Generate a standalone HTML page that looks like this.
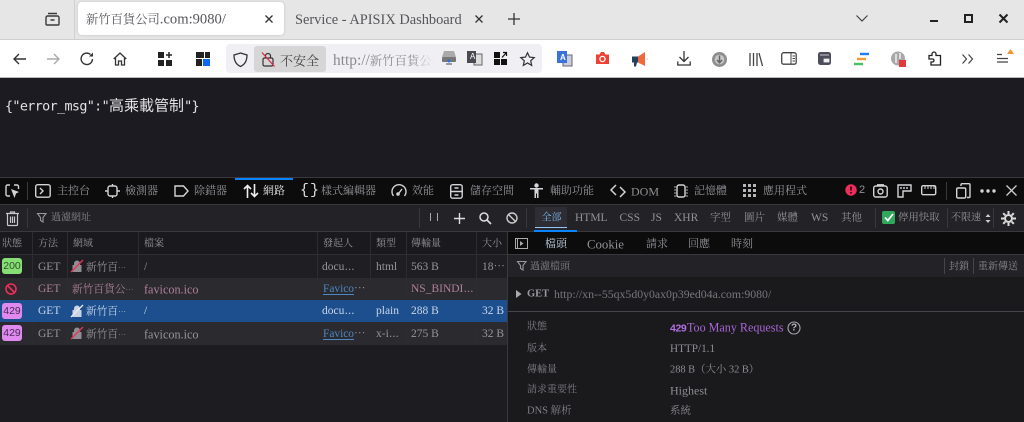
<!DOCTYPE html>
<html><head><meta charset="utf-8">
<style>
html,body{margin:0;padding:0;width:1024px;height:422px;overflow:hidden;background:#1c1b22}
body{position:relative;font-family:"Liberation Serif","Noto Serif CJK SC",serif}
#w{position:absolute;left:0;top:0;width:1024px;height:422px;overflow:hidden;filter:blur(.35px)}
.b{position:absolute}
.t{position:absolute;white-space:nowrap;line-height:1;transform:translateY(-50%)}
#dt ~ .t{transform:translateY(calc(-50% + .7px))}
svg{position:absolute;overflow:visible}
.tb{font-size:11px;color:#929297}
.s{font-size:10px;color:#929297}
.c{font-size:11.500px;color:#969699}
.k{font-size:10.700px}
.e{font-size:8px}
.f{font-size:12.200px}
.lk{color:#4d88c4;text-decoration:underline;text-underline-offset:2px;font-size:11.400px}
.l{font-size:10px;color:#808085}
.d{font-size:12px;color:#8e8e92}
.v{background:#2c2c31;width:1px;position:absolute}
.ic{fill:none;stroke:#d4d4d6;stroke-width:1.400}
.nv{fill:none;stroke:#3a3a3e;stroke-width:1.400}
</style></head><body><div id="w">
<!-- tab bar -->
<div class="b" style="left:0;top:0;width:1024px;height:39px;background:#e6e6e6"></div>
<div class="b" style="left:0;top:39px;width:1024px;height:1px;background:#cfcfcf"></div>
<div class="b" style="left:74px;top:0;width:1px;height:39px;background:#d0d0d0"></div>
<svg style="left:45px;top:11px" width="15" height="15" viewBox="0 0 15 15"><path class="nv" d="M1 6.500V13a1 1 0 0 0 1 1h11a1 1 0 0 0 1-1V6.500a1.500 1.500 0 0 0-1.500-1.500h-10A1.500 1.500 0 0 0 1 6.500zM3 2.500h9M5.500 9h4"/></svg>
<div class="b" style="left:78px;top:2px;width:206px;height:33px;background:#fff;border-radius:4px;box-shadow:0 0 3px rgba(0,0,0,.15)"></div>
<span class="t" style="left:86px;top:19.500px;font-size:14.600px;color:#55555a"><span style="font-size:12.300px">新竹百貨公司</span>.com:9080/</span>
<svg style="left:265px;top:15px" width="8" height="8"><path d="M.5.500l7 7M7.500.500l-7 7" stroke="#333" stroke-width="1.300"/></svg>
<span class="t" style="left:295px;top:19.500px;font-size:14.400px;color:#55555a">Service - APISIX Dashboard</span>
<svg style="left:475px;top:15px" width="8" height="8"><path d="M.5.500l7 7M7.500.500l-7 7" stroke="#333" stroke-width="1.300"/></svg>
<svg style="left:508px;top:13px" width="12" height="12"><path d="M6 0v12M0 6h12" stroke="#333" stroke-width="1.300"/></svg>
<svg style="left:856px;top:15px" width="12" height="7"><path d="M.5.500L6 6 11.500.500" fill="none" stroke="#444" stroke-width="1.200"/></svg>
<div class="b" style="left:930px;top:20px;width:8px;height:2px;background:#222"></div>
<div class="b" style="left:964px;top:14px;width:5px;height:5px;border:2px solid #222"></div>
<svg style="left:999px;top:14px" width="9" height="9"><path d="M.5.500l8 8M8.500.500l-8 8" stroke="#222" stroke-width="2"/></svg>
<!-- nav bar -->
<div class="b" style="left:0;top:40px;width:1024px;height:37px;background:#fff"></div>
<div class="b" style="left:0;top:77px;width:1024px;height:1px;background:#b8b8b8"></div>
<svg style="left:13px;top:53px" width="13" height="12"><path d="M13 6H1M6 1L1 6l5 5" fill="none" stroke="#333" stroke-width="1.400"/></svg>
<svg style="left:47px;top:53px" width="13" height="12"><path d="M0 6h12M7 1l5 5-5 5" fill="none" stroke="#aaa" stroke-width="1.400"/></svg>
<svg style="left:80px;top:52px" width="14" height="14" viewBox="0 0 14 14"><path d="M12.500 7A5.700 5.700 0 1 1 10.500 2.500" fill="none" stroke="#333" stroke-width="1.400"/><path d="M13 .5V4.500H9z" fill="#333"/></svg>
<svg style="left:113px;top:52px" width="14" height="14" viewBox="0 0 14 14"><path d="M.7 7L7 1l6.300 6M2.500 6v7h3V9h3v4h3V6" fill="none" stroke="#333" stroke-width="1.300"/></svg>
<svg style="left:158px;top:52px" width="14" height="14"><path d="M0 0h6v6H0zM0 8h6v6H0zM8 8h6v6H8z" fill="#222"/><path d="M11 0v6M8 3h6" stroke="#222" stroke-width="1.500"/></svg>
<svg style="left:196px;top:52px" width="14" height="14"><path d="M0 0h8v6H0zM9 0h5v6H9zM0 7h6v7H0z" fill="#222"/><path d="M7 7h7v7H7z" fill="#0a6cf0"/></svg>
<div class="b" style="left:226px;top:44px;width:316px;height:29px;background:#f0f0f4;border-radius:4px"></div>
<div class="b" style="left:254px;top:46px;width:72px;height:26px;background:#d6d6d6;border-radius:3px"></div>
<svg style="left:233px;top:52px" width="15" height="15" viewBox="0 0 15 15"><path d="M7.500 1L14 3c0 6-2 9.500-6.500 11.500C3 12.500 1 9 1 3z" fill="none" stroke="#333" stroke-width="1.300"/></svg>
<svg style="left:262px;top:52px" width="13" height="15" viewBox="0 0 13 15"><rect x="1" y="6" width="10" height="8" rx="1.500" fill="none" stroke="#333" stroke-width="1.200"/><path d="M3.500 6V4a2.500 2.500 0 0 1 5 0v2" fill="none" stroke="#333" stroke-width="1.200"/><path d="M0 .5L12.500 14.500" stroke="#e22850" stroke-width="1.300"/></svg>
<span class="t" style="left:280px;top:60.500px;font-size:13px;color:#444">不安全</span>
<span class="t" style="left:333px;top:60.500px;font-size:15.400px;color:#8a8a8a;width:102px;overflow:hidden;line-height:18px;-webkit-mask-image:linear-gradient(90deg,#000 75%,transparent)">http://<span style="font-size:12.400px">新竹百貨公司</span></span>
<svg style="left:441px;top:50px" width="16" height="16"><path d="M3 1h10l2 6H1z" fill="#aaa"/><rect x="1" y="7" width="14" height="5" rx="1" fill="#777"/><path d="M5 14h6" stroke="#99a" stroke-width="2"/><circle cx="8" cy="11" r="1.500" fill="#2a6fe0"/></svg>
<svg style="left:467px;top:51px" width="16" height="15"><path d="M7 3h8v11H7z" fill="#ddd" stroke="#666"/><path d="M0 0h9v12H0z" fill="#4a4a52"/></svg>
<span class="t" style="left:470px;top:57px;font-size:8px;color:#fff;font-family:'Liberation Sans'">A</span>
<svg style="left:494px;top:52px" width="13" height="13"><path d="M0 0h6v6H0zM0 7h6v6H0zM7 7h6v6H7z" fill="#111"/><path d="M8 5.500L12.500.5M9 .5h3.500V4" stroke="#111" fill="none" stroke-width="1.200"/></svg>
<svg style="left:520px;top:52px" width="15" height="14" viewBox="0 0 15 14"><path d="M7.500.8l2 4.300 4.700.5-3.500 3.200 1 4.600-4.200-2.400-4.200 2.400 1-4.600L.8 5.600l4.700-.5z" fill="none" stroke="#333" stroke-width="1.200"/></svg>
<svg style="left:557px;top:50px" width="16" height="17"><path d="M6 5h9v11H6z" fill="#ccd" stroke="#667"/><path d="M0 1h10v12H0z" fill="#3a72dc"/></svg>
<span class="t" style="left:560px;top:58px;font-size:8px;color:#fff;font-family:'Liberation Sans';font-weight:bold">A</span>
<svg style="left:596px;top:52px" width="13" height="12"><path d="M0 2.500h3.500L5 0h3l1.500 2.500H13V12H0z" fill="#ee4035"/><circle cx="6.500" cy="7" r="2.600" fill="none" stroke="#fff" stroke-width="1.300"/></svg>
<svg style="left:632px;top:52px" width="16" height="15"><path d="M0 4.500h6v6H5l-1 4H2V10.500H0z" fill="#24405e"/><path d="M6 4.500L13 0v14l-7-3.500z" fill="#ee6a3c"/><path d="M14.500 7h1" stroke="#8ab" stroke-width="1"/></svg>
<svg style="left:677px;top:51px" width="14" height="15"><path d="M7 0v10M2.500 6L7 10.500 11.500 6M.8 10.500v3.500h12.400v-3.500" fill="none" stroke="#333" stroke-width="1.300"/></svg>
<svg style="left:712px;top:52px" width="15" height="15"><circle cx="7.500" cy="7.500" r="7.500" fill="#8e8e8e"/><circle cx="7.500" cy="7.500" r="4.800" fill="#c8c8c8"/><path d="M7.500 3.500v7M5 8l2.500 2.800L10 8" fill="none" stroke="#666" stroke-width="1.500"/></svg>
<svg style="left:749px;top:52px" width="14" height="14"><path d="M1 1v13M4.500 1v13M8 1v13M10 1l3.500 13" stroke="#444" stroke-width="1.300" fill="none"/></svg>
<svg style="left:781px;top:52px" width="16" height="13"><rect x=".7" y=".7" width="14.500" height="11.500" rx="2" fill="none" stroke="#444" stroke-width="1.300"/><path d="M10 1v11M11.500 4h2.500M11.500 6.500h2.500M11.500 9h2.500" stroke="#444" fill="none"/></svg>
<svg style="left:818px;top:52px" width="13" height="13"><rect width="13" height="13" rx="2.500" fill="#4c4c5a"/><path d="M2 3h9M6 7h5v3H6z" stroke="#eee" fill="#eee" stroke-width=".8"/></svg>
<svg style="left:854px;top:53px" width="15" height="12"><path d="M6 1h9" stroke="#1e7cf2" stroke-width="2.400"/><path d="M3 6h9" stroke="#f0983a" stroke-width="2.400"/><path d="M0 11h9" stroke="#48c060" stroke-width="2.400"/></svg>
<svg style="left:891px;top:51px" width="16" height="16"><circle cx="7" cy="7.500" r="7" fill="#a8a8a8"/><path d="M5 3v9M9 2v6" stroke="#ddd" stroke-width="2"/><rect x="8" y="9" width="7" height="7" fill="#e03a3a"/></svg>
<svg style="left:928px;top:51px" width="14" height="15" viewBox="0 0 14 15"><path d="M1 4.500h3V3a2 2 0 0 1 4 0v1.500h4.500V14H3V11H4.500a1.500 1.500 0 0 0 0-3H1z" fill="none" stroke="#222" stroke-width="1.300"/></svg>
<svg style="left:962px;top:54px" width="12" height="10"><path d="M.5.500L4.500 5l-4 4.500M6.500.500L10.500 5l-4 4.500" fill="none" stroke="#444" stroke-width="1.200"/></svg>
<svg style="left:996px;top:49px" width="18" height="16"><path d="M1 5.500h5M1 9.500h11M1 13h11" stroke="#444" stroke-width="1.200"/><path d="M11 5l3.500-5L18 5z" fill="#f5962c"/></svg>
<!-- content -->
<div class="b" style="left:0;top:78px;width:1024px;height:100px;background:#1c1b22"></div>
<span class="t" style="left:5px;top:105.500px;color:#e2e2e4;font-family:'DejaVu Sans Mono','Noto Sans CJK SC',monospace;font-size:13.400px;letter-spacing:-.63px">{"error_msg":"<span style="font-size:15px;letter-spacing:0">高乘載管制</span>"}</span>
<i id="dt"></i>
<!-- devtools tabs -->
<div class="b" style="left:0;top:177px;width:1024px;height:1px;background:#38383d"></div>
<div class="b" style="left:0;top:178px;width:1024px;height:26px;background:#0c0c0d"></div>
<div class="b" style="left:0;top:204px;width:1024px;height:1px;background:#38383d"></div>
<div class="b" style="left:235px;top:178px;width:58px;height:2px;background:#0a84ff"></div>
<div class="b" style="left:27px;top:182px;width:1px;height:18px;background:#38383d"></div>
<svg style="left:5px;top:184px" width="15" height="15"><path d="M5 1H2.500A1.500 1.500 0 0 0 1 2.500v8A1.500 1.500 0 0 0 2.500 12H5M9 1h3a1.500 1.500 0 0 1 1.500 1.500V5" class="ic"/><path d="M6 5l8 3-3 1.500L9.500 14z" fill="#d4d4d6"/></svg>
<svg style="left:35px;top:184px" width="16" height="14"><rect x=".7" y=".7" width="14.500" height="12.500" rx="2" class="ic"/><path d="M5 4l3 3-3 3" class="ic"/></svg>
<span class="t tb" style="left:57px;top:191px">主控台</span>
<svg style="left:105px;top:184px" width="15" height="14"><rect x="3" y="2" width="9" height="10" rx="2" class="ic"/><path d="M7.500 0v2M7.500 12v2M0 7h3M12 7h3" class="ic"/></svg>
<span class="t tb" style="left:125px;top:191px">檢測器</span>
<svg style="left:174px;top:185px" width="15" height="12"><path d="M1 1h8.500L14 6l-4.500 5H1z" class="ic"/></svg>
<span class="t tb" style="left:194px;top:191px">除錯器</span>
<svg style="left:243px;top:184px" width="16" height="14"><path d="M4.500 14V1.500M1 5l3.500-3.500L8 5M11.500 0v12.500M8 9l3.500 3.500L15 9" fill="none" stroke="#f0f0f2" stroke-width="1.600"/></svg>
<span class="t" style="left:263px;top:191px;font-size:11px;color:#e0e0e2">網路</span>
<span class="t" style="left:300px;top:190px;font-size:15px;color:#ddd;font-family:'Liberation Mono';letter-spacing:1px">{}</span>
<span class="t tb" style="left:321px;top:191px">樣式編輯器</span>
<svg style="left:391px;top:184px" width="16" height="13"><path d="M2.500 12A7 7 0 1 1 13.500 12" class="ic"/><circle cx="7" cy="10" r="1.800" fill="#d4d4d6"/><path d="M8 9l3-4" class="ic"/></svg>
<span class="t tb" style="left:412px;top:191px">效能</span>
<svg style="left:450px;top:184px" width="13" height="15"><rect x=".7" y=".7" width="11.500" height="13.500" rx="2" class="ic"/><path d="M0 7.500h13M4.500 4h4M4.500 11h4" class="ic"/></svg>
<span class="t tb" style="left:470px;top:191px">儲存空間</span>
<svg style="left:530px;top:183px" width="13" height="16"><circle cx="6.500" cy="2.500" r="2.200" fill="#d4d4d6"/><path d="M0 5h13v1.500H8.500V15H7V10.500H6V15H4.500V6.500H0z" fill="#d4d4d6"/></svg>
<span class="t tb" style="left:550px;top:191px">輔助功能</span>
<svg style="left:610px;top:184px" width="16" height="14"><path d="M6 1L1 6l5 5M10 3l5 5-5 5" fill="none" stroke="#d4d4d6" stroke-width="1.500"/></svg>
<span class="t tb" style="left:631px;top:190.500px;font-size:12px">DOM</span>
<svg style="left:674px;top:184px" width="14" height="14"><rect x="3" y="1" width="8" height="12" rx="2" class="ic"/><path d="M0 3h3M0 6h3M0 9h3M0 12h3M11 3h3M11 6h3M11 9h3M11 12h3" stroke="#aaa"/></svg>
<span class="t tb" style="left:694px;top:191px">記憶體</span>
<svg style="left:743px;top:184px" width="14" height="14" fill="#b5b5b8"><path d="M0 0h3v3H0zM5 0h3v3H5zM10 0h3v3h-3zM0 5h3v3H0zM5 5h3v3H5zM10 5h3v3h-3zM0 10h3v3H0zM5 10h3v3H5zM10 10h3v3h-3z"/></svg>
<span class="t tb" style="left:763px;top:191px">應用程式</span>
<svg style="left:845px;top:184px" width="12" height="12"><circle cx="6" cy="6" r="5.700" fill="#f02d5a"/><path d="M6 2.500v4M6 8v1.500" stroke="#111" stroke-width="1.600"/></svg>
<span class="t tb" style="left:859px;top:190px;font-family:'Liberation Sans'">2</span>
<svg style="left:873px;top:184px" width="15" height="14"><rect x=".7" y="2" width="13.500" height="11" rx="2" class="ic"/><circle cx="7.500" cy="7.500" r="2.500" class="ic"/><path d="M4 .8h7" class="ic"/></svg>
<svg style="left:897px;top:184px" width="15" height="14"><path d="M1 13V1h13v6H6v6z" class="ic"/><path d="M4 3v2M7 3v2M10 3v2" class="ic"/></svg>
<svg style="left:921px;top:185px" width="16" height="11"><rect x=".7" y=".7" width="14" height="9" rx="1.500" class="ic"/><path d="M4 1v3M7 1v3M10 1v3M13 1v3" stroke="#d4d4d6"/></svg>
<div class="b" style="left:946px;top:182px;width:1px;height:18px;background:#38383d"></div>
<svg style="left:956px;top:183px" width="15" height="16"><path d="M5 3V1.500A1 1 0 0 1 6 .7h7a1 1 0 0 1 1 .8v12a1 1 0 0 1-1 1h-2" class="ic"/><rect x=".7" y="5" width="9" height="10" rx="1.200" class="ic"/></svg>
<svg style="left:980px;top:189px" width="16" height="4" fill="#d4d4d6"><circle cx="2" cy="2" r="1.700"/><circle cx="8" cy="2" r="1.700"/><circle cx="14" cy="2" r="1.700"/></svg>
<svg style="left:1006px;top:185px" width="11" height="11"><path d="M.5.500l10 10M10.500.500l-10 10" stroke="#ccc" stroke-width="1.300"/></svg>
<!-- toolbar -->
<div class="b" style="left:0;top:205px;width:1024px;height:26px;background:#232327"></div>
<div class="b" style="left:0;top:231px;width:1024px;height:1px;background:#38383d"></div>
<svg style="left:6px;top:211px" width="13" height="15"><path d="M0 2.500h13M4.500 2.500V1h4v1.500M1.500 3v10.500a1 1 0 0 0 1 1h8a1 1 0 0 0 1-1V3M4.500 5.500v6.500M6.500 5.500v6.500M8.500 5.500v6.500" fill="none" stroke="#c8c8ca" stroke-width="1.200"/></svg>
<div class="b" style="left:27px;top:208px;width:1px;height:20px;background:#38383d"></div>
<svg style="left:37px;top:213px" width="10" height="10"><path d="M.5.500h8.500L6 4.500V9L3.500 7.500v-3z" fill="none" stroke="#999" stroke-width="1.100"/></svg>
<span class="t l" style="left:51px;top:218px">過濾網址</span>
<div class="b" style="left:419px;top:208px;width:1px;height:20px;background:#38383d"></div>
<div class="b" style="left:430px;top:213px;width:1px;height:8px;background:#aaa"></div>
<div class="b" style="left:437px;top:213px;width:1px;height:8px;background:#aaa"></div>
<svg style="left:454px;top:213px" width="11" height="11"><path d="M5.500 0v11M0 5.500h11" stroke="#ddd" stroke-width="1.400"/></svg>
<svg style="left:479px;top:212px" width="13" height="13"><circle cx="5" cy="5" r="4" fill="none" stroke="#ddd" stroke-width="1.500"/><path d="M8 8l4 4" stroke="#ddd" stroke-width="1.700"/></svg>
<svg style="left:506px;top:212px" width="12" height="12"><circle cx="6" cy="6" r="5" fill="none" stroke="#ccc" stroke-width="1.400"/><path d="M2.500 2.500l7 7" stroke="#ccc" stroke-width="1.400"/></svg>
<div class="b" style="left:526px;top:208px;width:1px;height:20px;background:#38383d"></div>
<div class="b" style="left:535px;top:207px;width:32px;height:22px;background:#2d2d33"></div>
<div class="b" style="left:535px;top:227px;width:32px;height:1px;background:#8fc4f5"></div>
<div class="b" style="left:534px;top:230px;width:43px;height:2px;background:#0a84ff"></div>
<span class="t" style="left:541.500px;top:218px;font-size:10px;color:#7fb8ef">全部</span>
<span class="t s" style="left:575px;top:218px;font-size:11.500px">HTML</span>
<span class="t s" style="left:619.500px;top:218px;font-size:11.500px">CSS</span>
<span class="t s" style="left:651px;top:218px;font-size:11.500px">JS</span>
<span class="t s" style="left:674px;top:218px;font-size:11.500px">XHR</span>
<span class="t s" style="left:710px;top:218px;font-size:10.500px">字型</span>
<span class="t s" style="left:744px;top:218px;font-size:10.500px">圖片</span>
<span class="t s" style="left:777px;top:218px;font-size:10.500px">媒體</span>
<span class="t s" style="left:811px;top:218px;font-size:11.500px">WS</span>
<span class="t s" style="left:841px;top:218px;font-size:10.500px">其他</span>
<div class="b" style="left:875px;top:208px;width:1px;height:20px;background:#38383d"></div>
<div class="b" style="left:882px;top:211px;width:13px;height:13px;background:#2fa85c;border-radius:2px"></div>
<svg style="left:884px;top:213px" width="10" height="9"><path d="M1 4.500L3.800 7.500 9 1" fill="none" stroke="#fff" stroke-width="1.800"/></svg>
<span class="t s" style="left:898px;top:218px;font-size:10.400px">停用快取</span>
<div class="b" style="left:947px;top:208px;width:1px;height:20px;background:#38383d"></div>
<span class="t s" style="left:951px;top:218px">不限速</span>
<svg style="left:985px;top:214px" width="6" height="9" fill="#ccc"><path d="M3 0l2.500 3h-5zM3 9L.5 6h5z"/></svg>
<div class="b" style="left:993px;top:208px;width:1px;height:20px;background:#38383d"></div>
<svg style="left:1001px;top:211px" width="15" height="15" viewBox="0 0 15 15"><circle cx="7.500" cy="7.500" r="3.500" fill="none" stroke="#ddd" stroke-width="2"/><path d="M7.500 0v3M7.500 12v3M0 7.500h3M12 7.500h3M2.200 2.200l2.100 2.100M10.700 10.700l2.100 2.100M2.200 12.800l2.100-2.100M10.700 4.300l2.100-2.100" stroke="#ddd" stroke-width="2"/></svg>
<!-- table -->
<div class="b" style="left:0;top:232px;width:508px;height:190px;background:#1d1d21"></div>
<div class="b" style="left:0;top:232px;width:508px;height:22px;background:#1a1a1e"></div>
<div class="b" style="left:0;top:254px;width:508px;height:1px;background:#303034"></div>
<div class="b" style="left:0;top:255px;width:508px;height:23px;background:#1f1f23"></div>
<div class="b" style="left:0;top:278px;width:508px;height:22px;background:#2a2a2f"></div>
<div class="b" style="left:0;top:322px;width:508px;height:23px;background:#2a2a2f"></div>
<div class="v" style="left:32px;top:232px;height:113px"></div>
<div class="v" style="left:67px;top:232px;height:113px"></div>
<div class="v" style="left:138px;top:232px;height:113px"></div>
<div class="v" style="left:317px;top:232px;height:113px"></div>
<div class="v" style="left:370px;top:232px;height:113px"></div>
<div class="v" style="left:406px;top:232px;height:113px"></div>
<div class="v" style="left:476px;top:232px;height:113px"></div>
<div class="b" style="left:0;top:300px;width:508px;height:22px;background:#1d4f8f"></div>
<div class="b" style="left:507px;top:232px;width:1px;height:190px;background:#38383d"></div>
<span class="t s" style="left:2px;top:244px">狀態</span>
<span class="t s" style="left:38px;top:244px">方法</span>
<span class="t s" style="left:73px;top:244px">網域</span>
<span class="t s" style="left:144px;top:244px">檔案</span>
<span class="t s" style="left:323px;top:244px">發起人</span>
<span class="t s" style="left:376px;top:244px">類型</span>
<span class="t s" style="left:411px;top:244px">傳輸量</span>
<span class="t s" style="left:482px;top:244px">大小</span>
<!-- row1 -->
<div class="b" style="left:2px;top:258px;width:20px;height:16px;background:#86de74;border-radius:3px;color:#2f5026;font:10.500px/16px 'Liberation Sans';text-align:center">200</div>
<span class="t c" style="left:38px;top:266.500px">GET</span>
<svg style="left:71px;top:260px" width="12" height="12"><path d="M3 5V3.500a3 3 0 0 1 6 0V5h1.500v7h-9V5z" fill="#8f8f92"/><path d="M0 12L12 0" stroke="#e8325a" stroke-width="1.300"/></svg>
<span class="t c k" style="left:86px;top:266.500px">新竹百<span class="e">⋯</span></span>
<span class="t c" style="left:144px;top:266.500px">/</span>
<span class="t c" style="left:322px;top:266.500px">docu⋯</span>
<span class="t c" style="left:376px;top:266.500px">html</span>
<span class="t c" style="left:411px;top:266.500px">563 B</span>
<span class="t c" style="left:482px;top:266.500px">18⋯</span>
<!-- row2 -->
<svg style="left:5px;top:283px" width="12" height="12"><circle cx="6" cy="6" r="5" fill="none" stroke="#f02d5a" stroke-width="1.600"/><path d="M2.500 2.500l7 7" stroke="#f02d5a" stroke-width="1.600"/></svg>
<span class="t c" style="left:38px;top:289px;color:#b0809a">GET</span>
<span class="t c k" style="left:72px;top:289px;color:#b0809a">新竹百貨公<span class="e">⋯</span></span>
<span class="t c f" style="left:144px;top:289px;color:#b0809a">favicon.ico</span>
<span class="t lk" style="left:323px;top:289px">Favico</span><span class="t c" style="left:354px;top:289px">⋯</span>
<span class="t c" style="left:411px;top:289px;color:#b0809a">NS_BINDI⋯</span>
<!-- row3 -->
<div class="b" style="left:2px;top:303px;width:20px;height:16px;background:#e08af0;border-radius:3px;color:#4a2a55;font:10.500px/16px 'Liberation Sans';text-align:center">429</div>
<span class="t c" style="left:38px;top:311px;color:#c9d6e6">GET</span>
<svg style="left:71px;top:305px" width="12" height="12"><path d="M3 5V3.500a3 3 0 0 1 6 0V5h1.500v7h-9V5z" fill="#c8d4e4"/><path d="M0 12L12 0" stroke="#e8e8f0" stroke-width="1.300"/></svg>
<span class="t c k" style="left:86px;top:311px;color:#c9d6e6">新竹百<span class="e">⋯</span></span>
<span class="t c" style="left:144px;top:311px;color:#c9d6e6">/</span>
<span class="t c" style="left:322px;top:311px;color:#c9d6e6">docu⋯</span>
<span class="t c" style="left:376px;top:311px;color:#c9d6e6">plain</span>
<span class="t c" style="left:411px;top:311px;color:#c9d6e6">288 B</span>
<span class="t c" style="left:482px;top:311px;color:#c9d6e6">32 B</span>
<!-- row4 -->
<div class="b" style="left:2px;top:325px;width:20px;height:16px;background:#e08af0;border-radius:3px;color:#4a2a55;font:10.500px/16px 'Liberation Sans';text-align:center">429</div>
<span class="t c" style="left:38px;top:333.500px">GET</span>
<svg style="left:71px;top:327px" width="12" height="12"><path d="M3 5V3.500a3 3 0 0 1 6 0V5h1.500v7h-9V5z" fill="#8f8f92"/><path d="M0 12L12 0" stroke="#e8325a" stroke-width="1.300"/></svg>
<span class="t c k" style="left:86px;top:333.500px">新竹百<span class="e">⋯</span></span>
<span class="t c f" style="left:144px;top:333.500px">favicon.ico</span>
<span class="t lk" style="left:323px;top:333.500px">Favico</span><span class="t c" style="left:354px;top:333.500px">⋯</span>
<span class="t c" style="left:376px;top:333.500px">x-i⋯</span>
<span class="t c" style="left:411px;top:333.500px">275 B</span>
<span class="t c" style="left:482px;top:333.500px">32 B</span>
<!-- side panel -->
<div class="b" style="left:508px;top:232px;width:516px;height:190px;background:#1a1a1d"></div>
<div class="b" style="left:508px;top:232px;width:516px;height:22px;background:#0c0c0d"></div>
<div class="b" style="left:508px;top:254px;width:516px;height:1px;background:#38383d"></div>
<div class="b" style="left:508px;top:255px;width:516px;height:22px;background:#232327"></div>
<svg style="left:515px;top:238px" width="13" height="11"><rect x=".5" y=".5" width="12" height="10" fill="none" stroke="#aaa"/><path d="M2.500 1v9" stroke="#aaa"/><path d="M5 3l3.500 2.500L5 8z" fill="#aaa"/></svg>
<span class="t" style="left:545px;top:244px;font-size:11px;color:#c4d4e4">檔頭</span>
<span class="t s" style="left:587px;top:243.500px;font-size:12.800px">Cookie</span>
<span class="t tb" style="left:646px;top:244px">請求</span>
<span class="t tb" style="left:688px;top:244px">回應</span>
<span class="t tb" style="left:731px;top:244px">時刻</span>
<svg style="left:517px;top:261px" width="10" height="10"><path d="M.5.500h8.500L6 4.500V9L3.500 7.500v-3z" fill="none" stroke="#999" stroke-width="1.100"/></svg>
<span class="t l" style="left:530px;top:266.500px">過濾檔頭</span>
<div class="b" style="left:944px;top:258px;width:1px;height:16px;background:#45454a"></div>
<div class="b" style="left:973px;top:258px;width:1px;height:16px;background:#45454a"></div>
<span class="t s" style="left:949px;top:266.500px;color:#8d8d92">封鎖</span>
<span class="t s" style="left:978px;top:266.500px;color:#8d8d92">重新傳送</span>
<svg style="left:516px;top:290px" width="6" height="8"><path d="M0 0l5.500 4L0 8z" fill="#aaa"/></svg>
<span class="t" style="left:527px;top:294px;font-size:10.500px;color:#9a9a9e;font-weight:bold">GET</span>
<span class="t" style="left:554px;top:294px;font-size:11.800px;color:#77777c">http://xn--55qx5d0y0ax0p39ed04a.com:9080/</span>
<div class="b" style="left:508px;top:311px;width:516px;height:1px;background:#45454a"></div>
<span class="t l" style="left:527px;top:327px">狀態</span>
<span class="t" style="left:670px;top:327.500px;font-size:10.500px;color:#b56fe0;font-family:'Liberation Sans';font-weight:bold;letter-spacing:-.4px">429</span>
<span class="t" style="left:687px;top:327px;font-size:12.100px;color:#a865d4">Too Many Requests</span>
<svg style="left:787px;top:321px" width="14" height="14"><circle cx="7" cy="7" r="6" fill="none" stroke="#a8a8ac" stroke-width="1.100"/></svg>
<span class="t" style="left:791px;top:327.500px;font-size:10px;color:#b8b8bc;font-family:'Liberation Sans';font-weight:bold">?</span>
<span class="t l" style="left:527px;top:349px">版本</span>
<span class="t d" style="left:670px;top:349px;font-size:11.200px">HTTP/1.1</span>
<span class="t l" style="left:527px;top:370px">傳輸量</span>
<span class="t d" style="left:670px;top:370px;font-size:10.400px">288 B（大小 32 B）</span>
<span class="t l" style="left:527px;top:390px">請求重要性</span>
<span class="t d" style="left:670px;top:389.500px">Highest</span>
<span class="t l" style="left:527px;top:411px;font-size:10.500px">DNS 解析</span>
<span class="t d" style="left:670px;top:411px;font-size:10.500px">系統</span>
</div></body></html>
